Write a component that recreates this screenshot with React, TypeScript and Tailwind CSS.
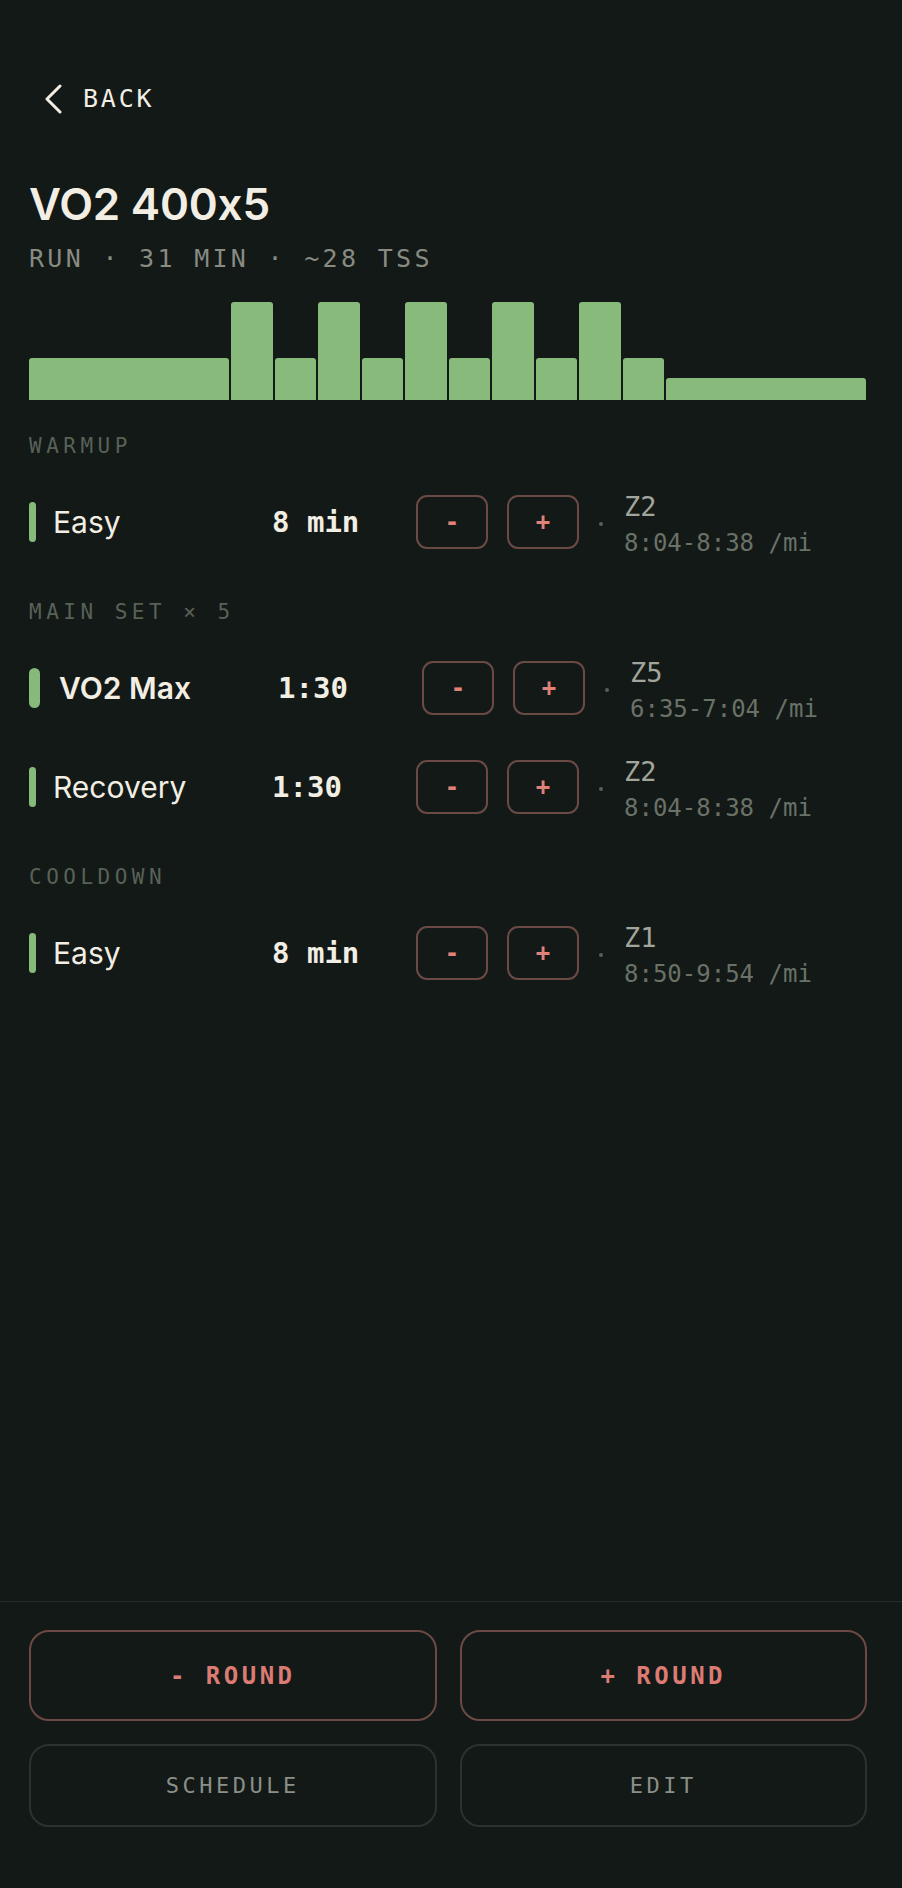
import React from "react";

const MONO = "font-['DejaVu_Sans_Mono','Liberation_Mono',monospace]";
const SANS = "font-['Inter','Noto_Sans',sans-serif]";

type Bar = { w: number; h: number };
const bars: Bar[] = [
  { w: 200, h: 42 },
  ...Array.from({ length: 5 }).flatMap(() => [
    { w: 41.5, h: 98 },
    { w: 41.5, h: 42 },
  ]),
  { w: 200, h: 22 },
];

type Step = {
  name: string;
  dur: string;
  zone: string;
  pace: string;
  active?: boolean;
};

const sections: { label: string; steps: Step[] }[] = [
  {
    label: "WARMUP",
    steps: [{ name: "Easy", dur: "8 min", zone: "Z2", pace: "8:04-8:38 /mi" }],
  },
  {
    label: "MAIN SET × 5",
    steps: [
      { name: "VO2 Max", dur: "1:30", zone: "Z5", pace: "6:35-7:04 /mi", active: true },
      { name: "Recovery", dur: "1:30", zone: "Z2", pace: "8:04-8:38 /mi" },
    ],
  },
  {
    label: "COOLDOWN",
    steps: [{ name: "Easy", dur: "8 min", zone: "Z1", pace: "8:50-9:54 /mi" }],
  },
];

function StepRow({ s }: { s: Step }) {
  return (
    <div className="flex items-center h-[99px]">
      <div
        className={
          s.active
            ? "w-[11px] h-[40px] rounded-full bg-[#86b97a]"
            : "w-[7px] h-[40px] rounded-full bg-[#86b97a]"
        }
      />
      <div
        className={
          s.active
            ? `${SANS} ml-[19px] w-[219px] text-[30px] leading-[36px] font-semibold text-[#f3eee4]`
            : `${SANS} ml-[17px] w-[219px] text-[30px] leading-[36px] font-normal text-[#f3eee4]`
        }
      >
        {s.name}
      </div>
      <div className={`${MONO} w-[144px] text-[29px] leading-[36px] font-bold text-[#f3eee4]`}>
        {s.dur}
      </div>
      <div className="flex gap-[19px]">
        <button
          className={`${MONO} w-[72px] h-[54px] rounded-[11px] border-2 border-[#6b4a45] text-[#e0817a] text-[24px] font-bold flex items-center justify-center`}
        >
          -
        </button>
        <button
          className={`${MONO} w-[72px] h-[54px] rounded-[11px] border-2 border-[#6b4a45] text-[#e0817a] text-[24px] font-bold flex items-center justify-center`}
        >
          +
        </button>
      </div>
      <div className="ml-[20px] mt-[4px] w-[4px] h-[4px] rounded-full bg-[#596056]" />
      <div className={`${MONO} ml-[21px] mt-[6px] flex flex-col gap-[6px]`}>
        <div className="text-[27px] leading-[30px] text-[#a1a59c]">{s.zone}</div>
        <div className="text-[24px] leading-[30px] text-[#6a7167]">{s.pace}</div>
      </div>
    </div>
  );
}

export default function App() {
  return (
    <div className="w-[902px] h-[1888px] bg-[#121917] flex flex-col overflow-hidden">
      <main className="flex-1 pl-[29px] pr-[36px]">
        <div className="pt-[79px] h-[119px] flex items-center">
          <svg
            className="ml-[16px]"
            width="18"
            height="30"
            viewBox="0 0 18 30"
            fill="none"
            stroke="#f3eee4"
            strokeWidth="3"
            strokeLinecap="round"
            strokeLinejoin="round"
          >
            <polyline points="15,2 2,15 15,28" />
          </svg>
          <span
            className={`${MONO} ml-[20px] text-[25px] leading-[40px] tracking-[2.8px] text-[#f3eee4]`}
          >
            BACK
          </span>
        </div>
        <h1
          className={`${SANS} mt-[63px] text-[44px] leading-[44px] font-semibold tracking-[-0.2px] [font-feature-settings:'calt'_0] text-[#f3eee4]`}
        >
          VO2 400x5
        </h1>
        <div
          className={`${MONO} mt-[19px] text-[25px] leading-[28px] tracking-[3.3px] text-[#878b82]`}
        >
          RUN · 31 MIN · ~28 TSS
        </div>
        <div className="mt-[29px] h-[98px] flex items-end gap-[2px]">
          {bars.map((b, i) => (
            <div
              key={i}
              className="rounded-t-[3px] bg-[#88ba7c]"
              style={{ flexGrow: b.w, flexBasis: 0, height: b.h }}
            />
          ))}
        </div>
        <div className="mt-[34px]">
          {sections.map((sec, i) => (
            <div key={sec.label} className={i === 0 ? "" : "mt-[29px]"}>
              <div
                className={`${MONO} text-[21px] leading-[24px] tracking-[4.5px] text-[#596157] mb-[14px]`}
              >
                {sec.label}
              </div>
              {sec.steps.map((s, j) => (
                <StepRow key={j} s={s} />
              ))}
            </div>
          ))}
        </div>
      </main>
      <footer className="border-t border-[#252c28] pt-[28px] pb-[61px] pl-[29px] pr-[35px]">
        <div className="grid grid-cols-2 gap-x-[23px] gap-y-[23px]">
          <button
            className={`${MONO} h-[91px] rounded-[20px] border-2 border-[#6b4a45] text-[24px] font-bold tracking-[3.5px] text-[#db7b73] flex items-center justify-center`}
          >
            - ROUND
          </button>
          <button
            className={`${MONO} h-[91px] rounded-[20px] border-2 border-[#6b4a45] text-[24px] font-bold tracking-[3.5px] text-[#db7b73] flex items-center justify-center`}
          >
            + ROUND
          </button>
          <button
            className={`${MONO} h-[83px] rounded-[20px] border-2 border-[#2c332f] text-[22px] tracking-[3.5px] text-[#8b8f87] flex items-center justify-center`}
          >
            SCHEDULE
          </button>
          <button
            className={`${MONO} h-[83px] rounded-[20px] border-2 border-[#2c332f] text-[22px] tracking-[3.5px] text-[#8b8f87] flex items-center justify-center`}
          >
            EDIT
          </button>
        </div>
      </footer>
    </div>
  );
}
